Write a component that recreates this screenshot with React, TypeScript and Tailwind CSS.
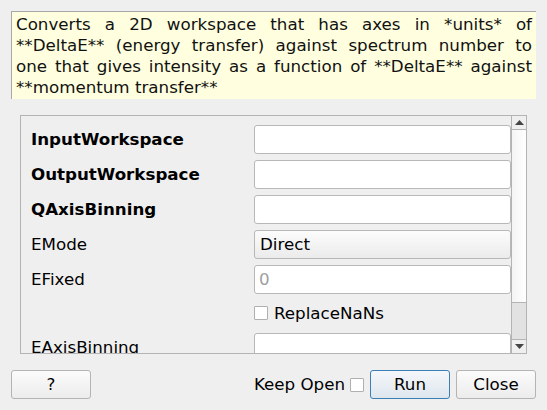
import React from "react";

const font = { fontFamily: '"DejaVu Sans", sans-serif' };

function Row({ label, bold, children }: { label: string; bold?: boolean; children: React.ReactNode }) {
  return (
    <div className="flex h-[29px] shrink-0 items-center">
      <div className={`w-[233px] shrink-0 pl-[10px] text-[16.7px] text-black ${bold ? "font-bold" : ""}`}>{label}</div>
      <div className="flex-1 h-full">{children}</div>
    </div>
  );
}

function TextInput({ placeholder }: { placeholder?: string }) {
  return (
    <div className="h-full w-full bg-white border border-[#b8b8b8] rounded-[3px] flex items-center pl-[4px] text-[16.7px] text-[#a0a0a0]">
      {placeholder}
    </div>
  );
}

function Checkbox() {
  return <div className="w-[14px] h-[14px] bg-white border border-[#b0b0b0] rounded-[1px] shrink-0" />;
}

export default function App() {
  return (
    <div className="w-[547px] h-[410px] bg-[#efefef] pt-[11px] px-[11px] flex flex-col text-black" style={font}>
      <div className="h-[88px] shrink-0 bg-[#ffffdf] border-l border-t border-[#a8a8a8] pl-[4px] pr-[4px] pt-[2px] text-[16.7px] leading-[21px] text-justify text-[#111]">
        Converts a 2D workspace that has axes in *units* of **DeltaE** (energy transfer) against spectrum number to one
        that gives intensity as a function of **DeltaE** against **momentum transfer**
      </div>
      <div className="mt-[16px] ml-[9px] mr-[9px] h-[239px] shrink-0 border border-[#b4b4b4] flex overflow-hidden">
        <div className="flex-1 flex flex-col gap-[6px] pt-[9px] overflow-hidden">
          <Row label="InputWorkspace" bold>
            <TextInput />
          </Row>
          <Row label="OutputWorkspace" bold>
            <TextInput />
          </Row>
          <Row label="QAxisBinning" bold>
            <TextInput />
          </Row>
          <Row label="EMode">
            <div className="h-full w-full bg-gradient-to-b from-[#fcfcfc] to-[#ebebeb] border border-[#b8b8b8] rounded-[3px] flex items-center pl-[5px] text-[16.7px] text-black">
              Direct
            </div>
          </Row>
          <Row label="EFixed">
            <TextInput placeholder="0" />
          </Row>
          <div className="flex h-[27px] shrink-0 items-center">
            <div className="w-[233px] shrink-0" />
            <div className="flex items-center gap-[6px] text-[16.7px]">
              <Checkbox />
              <span>ReplaceNaNs</span>
            </div>
          </div>
          <Row label="EAxisBinning">
            <TextInput />
          </Row>
        </div>
        <div className="w-[15px] shrink-0 flex flex-col border-l border-[#b4b4b4]">
          <div className="h-[14px] border-b border-[#b4b4b4] flex items-center justify-center">
            <svg width="9" height="5" viewBox="0 0 9 5"><polygon points="0,5 9,5 4.5,0" fill="#444" /></svg>
          </div>
          <div className="flex-1 bg-gradient-to-r from-[#f4f4f4] to-[#ffffff]" />
          <div className="h-[38px] bg-[#e2e2e2] border-y border-[#b4b4b4]" />
          <div className="h-[13px] flex items-center justify-center">
            <svg width="9" height="5" viewBox="0 0 9 5"><polygon points="0,0 9,0 4.5,5" fill="#444" /></svg>
          </div>
        </div>
      </div>
      <div className="mt-[16px] flex items-center h-[29px]">
        <div className="w-[80px] h-[29px] border border-[#b4b4b4] rounded-[3px] bg-gradient-to-b from-[#fbfbfb] to-[#ececec] flex items-center justify-center text-[16.7px]">
          ?
        </div>
        <div className="flex-1" />
        <span className="text-[16.7px] mr-[5px]">Keep Open</span>
        <Checkbox />
        <div className="ml-[6px] w-[80px] h-[29px] border border-[#3b7fb4] rounded-[3px] bg-gradient-to-b from-[#f4f7fa] to-[#dfe6ee] flex items-center justify-center text-[16.7px]">
          Run
        </div>
        <div className="ml-[6px] w-[80px] h-[29px] border border-[#b4b4b4] rounded-[3px] bg-gradient-to-b from-[#fbfbfb] to-[#ececec] flex items-center justify-center text-[16.7px]">
          Close
        </div>
      </div>
    </div>
  );
}
